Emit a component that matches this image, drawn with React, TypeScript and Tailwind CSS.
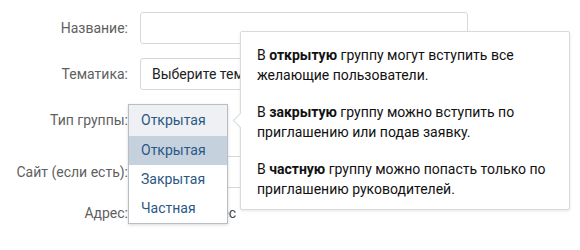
import React from 'react'

const font = { fontFamily: 'Roboto, "Open Sans", sans-serif' }

function Row({ label, children, className = '' }: { label: string; children?: React.ReactNode; className?: string }) {
  return (
    <div className={`flex items-center ${className}`}>
      <div className="w-[128px] shrink-0 text-right text-[14px] text-[#5f5f5f]">{label}</div>
      <div className="ml-[12px] flex-1">{children}</div>
    </div>
  )
}

export default function App() {
  return (
    <div className="relative h-[250px] w-[580px] overflow-hidden bg-white" style={font}>
      <div className="flex flex-col pt-[12px]">
        <Row label="Название:">
          <div className="h-[32px] w-[328px] rounded-[3px] border border-[#d3d9de] bg-white" />
        </Row>
        <Row label="Тематика:" className="mt-[14px]">
          <div className="flex h-[32px] w-[328px] items-center rounded-[3px] border border-[#d3d9de] bg-white pl-[11px] text-[14px] text-[#222]">
            Выберите тематику
          </div>
        </Row>
        <Row label="Тип группы:" className="mt-[14px] h-[32px]" />
        <Row label="Сайт (если есть):" className="mt-[20px]">
          <div className="h-[32px] w-[328px] rounded-[3px] border border-[#d3d9de] bg-white" />
        </Row>
        <Row label="Адрес:" className="mt-[15px]">
          <div className="w-[96px] text-right text-[14px] text-[#444]">vk.com/адрес</div>
        </Row>
      </div>

      {/* open select */}
      <div className="absolute left-[128px] top-[104px] w-[100px] border border-[#b9bec4] bg-white text-[14px] text-[#2a5885] shadow-[0_1px_3px_rgba(0,0,0,0.15)]">
        <div className="flex h-[31px] items-center bg-[#eef0f3] pl-[12px]">Открытая</div>
        <div className="flex h-[29px] items-center bg-[#c5d2de] pl-[12px]">Открытая</div>
        <div className="flex h-[29px] items-center pl-[12px]">Закрытая</div>
        <div className="flex h-[29px] items-center pl-[12px]">Частная</div>
      </div>

      {/* hint */}
      <div className="absolute left-[240px] top-[31px] w-[330px] rounded-[2px] border border-[#d6dbe0] bg-white pb-[10px] pl-[16px] pr-[12px] pt-[13px] text-[14px] leading-[20px] text-[#111] shadow-[0_1px_3px_rgba(0,0,0,0.1)]">
        <div className="absolute left-[-6px] top-[83px] h-[11px] w-[11px] rotate-45 border-b border-l border-[#d6dbe0] bg-white" />
        <p>
          В <b>открытую</b> группу могут вступить все
          <br />
          желающие пользователи.
        </p>
        <p className="mt-[17px]">
          В <b>закрытую</b> группу можно вступить по
          <br />
          приглашению или подав заявку.
        </p>
        <p className="mt-[17px]">
          В <b>частную</b> группу можно попасть только по
          <br />
          приглашению руководителей.
        </p>
      </div>
    </div>
  )
}
